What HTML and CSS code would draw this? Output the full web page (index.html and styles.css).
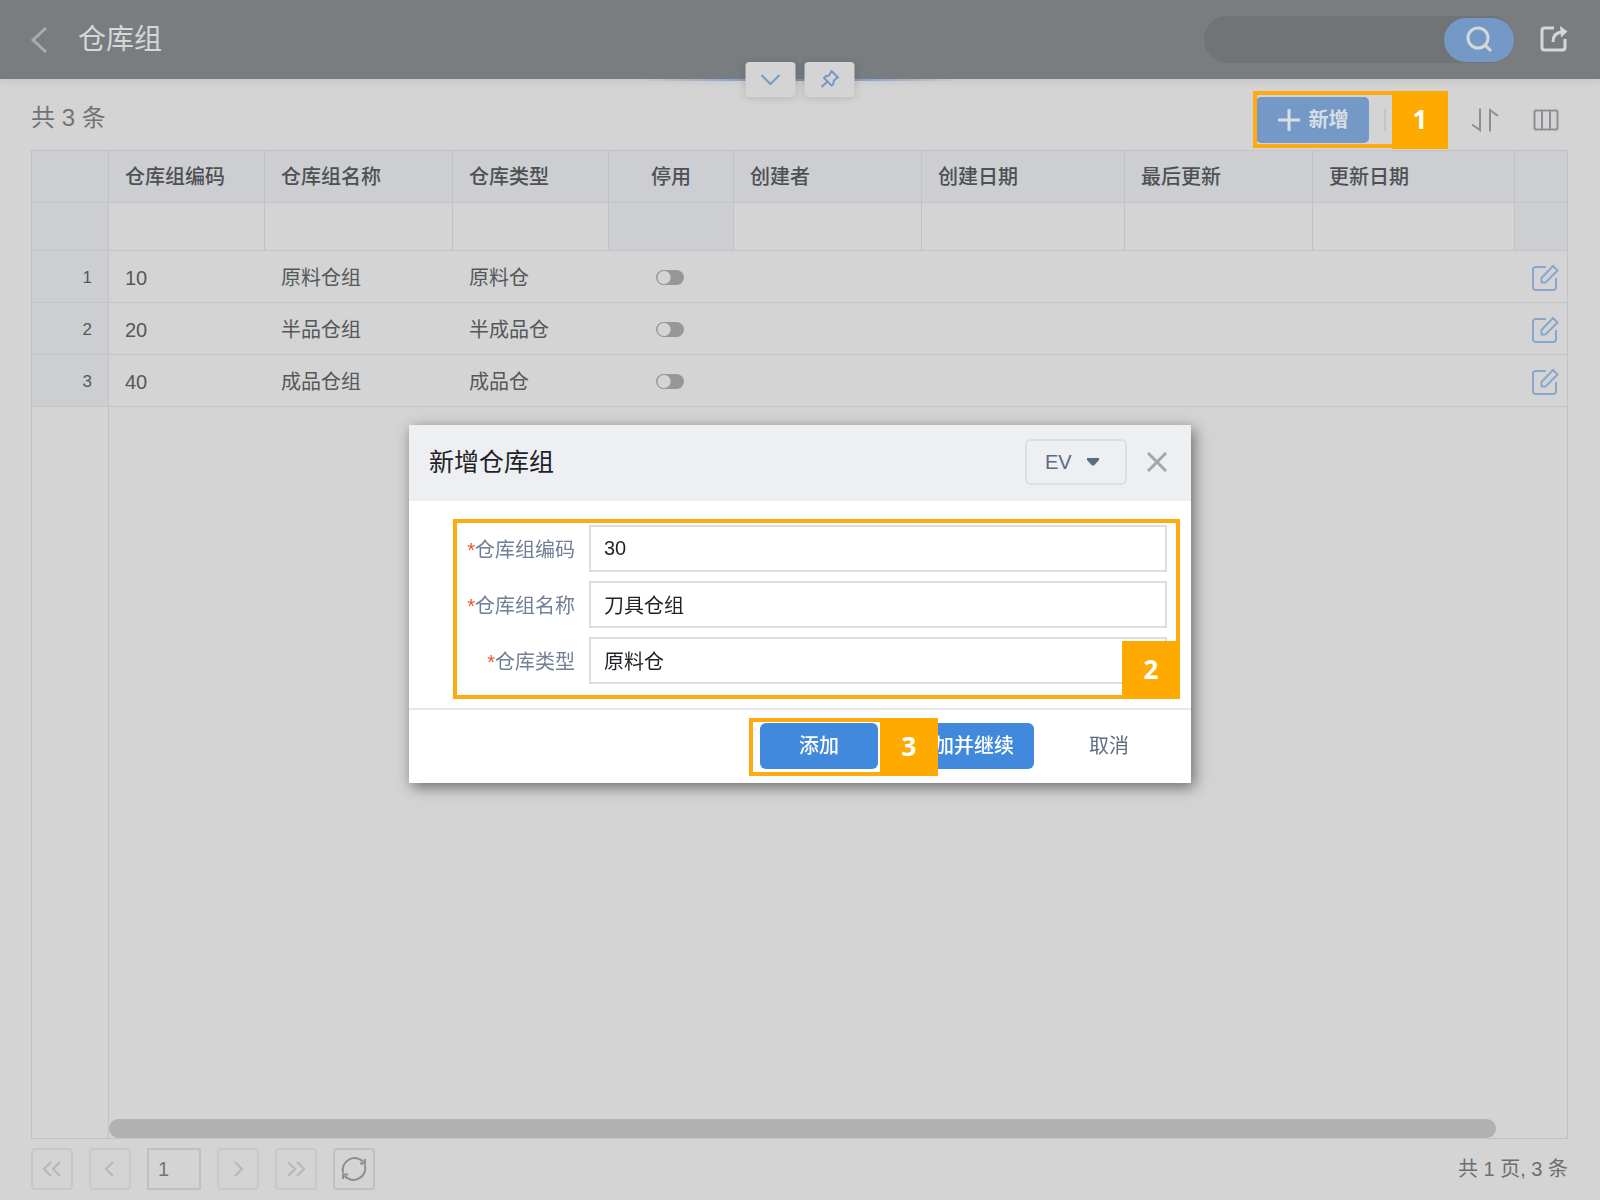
FILE: index.html
```html
<!DOCTYPE html>
<html lang="zh-CN">
<head>
<meta charset="utf-8">
<meta name="viewport" content="width=device-width, initial-scale=1">
<title>仓库组</title>
<link rel="stylesheet" href="styles.css">
</head>
<body>
<svg class="defs" aria-hidden="true">
  <symbol id="edit" viewBox="0 0 28 28"><path d="M15 3H4.500a2.500 2.500 0 0 0-2.500 2.500v18A2.500 2.500 0 0 0 4.500 26h18a2.500 2.500 0 0 0 2.500-2.500V14M10.500 14v4.500h4L26.500 6.500 22 2z"/></symbol>
</svg>
<div class="page">
  <header class="topbar">
    <button class="plain back" aria-label="返回"><svg width="18" height="28" viewBox="0 0 18 28"><path d="M16 2 3 14l13 12"/></svg></button>
    <h1>仓库组</h1>
    <form class="search">
      <input type="search" aria-label="搜索">
      <button type="button" aria-label="搜索"><svg width="28" height="28" viewBox="0 0 28 28"><circle cx="13" cy="12" r="10"/><path d="m20.500 19.500 5.500 5.500"/></svg></button>
    </form>
    <button class="plain share" aria-label="分享"><svg width="28" height="28" viewBox="0 0 28 28"><path d="M14 2H4.500A2.500 2.500 0 0 0 2 4.500v17A2.500 2.500 0 0 0 4.500 24h18a2.500 2.500 0 0 0 2.500-2.500V13M13 16c0-6 3-9.500 9-10"/><path class="solid" d="m20 0 7.500 5.500-6.500 6z"/></svg></button>
    <div class="handles">
      <button aria-label="展开"><svg width="20" height="12" viewBox="0 0 20 12"><path d="m1 1 9 9 9-9"/></svg></button>
      <button aria-label="固定"><svg width="20" height="20" viewBox="0 0 20 20"><path d="m12 1 6.500 6.500-2 1-2 2-1 4-1.500 1L4.500 8 6 6.500l3.500-1L11 3zM8 11.500 2 17"/></svg></button>
    </div>
  </header>

  <main>
    <div class="toolbar">
      <p class="count">共 3 条</p>
      <div class="add-wrap">
        <button class="add"><svg width="24" height="24" viewBox="0 0 24 24"><path d="M12 1v22M1 12h22"/></svg>新增</button>
        <div class="mark mark-add"><span>1</span></div>
      </div>
      <button class="plain tool" aria-label="排序"><svg width="28" height="26" viewBox="0 0 28 26"><path d="M1 17.500 9 23V1.500M19 24.500V3l8 6"/></svg></button>
      <button class="plain tool" aria-label="列设置"><svg width="28" height="24" viewBox="0 0 28 24"><path d="M3.500 2.500h21a1 1 0 0 1 1 1v17a1 1 0 0 1-1 1h-21a1 1 0 0 1-1-1v-17a1 1 0 0 1 1-1zM10 2.500v19M18 2.500v19"/></svg></button>
    </div>

    <div class="grid">
      <table>
        <colgroup><col class="c-index"><col class="c-small"><col class="c-medium"><col class="c-small"><col class="c-toggle"><col class="c-medium"><col class="c-date"><col class="c-medium"><col><col class="c-action"></colgroup>
        <thead>
          <tr><th></th><th>仓库组编码</th><th>仓库组名称</th><th>仓库类型</th><th class="mid">停用</th><th>创建者</th><th>创建日期</th><th>最后更新</th><th>更新日期</th><th></th></tr>
          <tr class="filter"><td class="shade"></td><td><input aria-label="筛选仓库组编码"></td><td><input aria-label="筛选仓库组名称"></td><td><input aria-label="筛选仓库类型"></td><td class="shade"></td><td><input aria-label="筛选创建者"></td><td><input aria-label="筛选创建日期"></td><td><input aria-label="筛选最后更新"></td><td><input aria-label="筛选更新日期"></td><td class="shade"></td></tr>
        </thead>
        <tbody>
          <tr><td class="num">1</td><td>10</td><td>原料仓组</td><td>原料仓</td><td class="mid"><input type="checkbox" aria-label="停用"></td><td></td><td></td><td></td><td></td><td class="act"><button class="plain" aria-label="编辑"><svg width="28" height="28"><use href="#edit"/></svg></button></td></tr>
          <tr><td class="num">2</td><td>20</td><td>半品仓组</td><td>半成品仓</td><td class="mid"><input type="checkbox" aria-label="停用"></td><td></td><td></td><td></td><td></td><td class="act"><button class="plain" aria-label="编辑"><svg width="28" height="28"><use href="#edit"/></svg></button></td></tr>
          <tr><td class="num">3</td><td>40</td><td>成品仓组</td><td>成品仓</td><td class="mid"><input type="checkbox" aria-label="停用"></td><td></td><td></td><td></td><td></td><td class="act"><button class="plain" aria-label="编辑"><svg width="28" height="28"><use href="#edit"/></svg></button></td></tr>
        </tbody>
      </table>
      <div class="rest"><div class="gutter"></div><div class="track"><div class="thumb"></div></div></div>
    </div>

    <nav class="pager" aria-label="分页">
      <button aria-label="首页"><svg width="20" height="18" viewBox="0 0 20 18"><path d="M9 2 2 9l7 7M18 2l-7 7 7 7"/></svg></button>
      <button aria-label="上一页"><svg width="20" height="18" viewBox="0 0 20 18"><path d="m13 2-7 7 7 7"/></svg></button>
      <input value="1" aria-label="页码">
      <button aria-label="下一页"><svg width="20" height="18" viewBox="0 0 20 18"><path d="m7 2 7 7-7 7"/></svg></button>
      <button aria-label="末页"><svg width="20" height="18" viewBox="0 0 20 18"><path d="m2 2 7 7-7 7M11 2l7 7-7 7"/></svg></button>
      <button class="refresh" aria-label="刷新"><svg width="28" height="28" viewBox="0 0 28 28"><path d="M3 18A12 12 0 0 1 23.500 7M25 10A12 12 0 0 1 4.500 21M25 4v4.500h-5M3 24v-4.500h5"/></svg></button>
      <p>共 1 页, 3 条</p>
    </nav>
  </main>
</div>

<div class="overlay">
  <section class="dialog" role="dialog" aria-labelledby="dlg-title">
    <header>
      <h2 id="dlg-title">新增仓库组</h2>
      <div class="view">
        <select aria-label="视图"><option>EV</option></select>
        <svg width="14" height="8" viewBox="0 0 14 8"><path d="M1 0h12v2L8 7.500H6L1 2z"/></svg>
      </div>
      <button class="plain close" aria-label="关闭"><svg width="20" height="20" viewBox="0 0 20 20"><path d="m1 1 18 18M19 1 1 19"/></svg></button>
    </header>
    <form class="fields">
      <label for="code"><i>*</i>仓库组编码</label><input id="code" value="30">
      <label for="name"><i>*</i>仓库组名称</label><input id="name" value="刀具仓组">
      <label for="type"><i>*</i>仓库类型</label><select id="type"><option>原料仓</option></select>
      <div class="mark mark-fields"><span>2</span></div>
    </form>
    <footer>
      <button class="primary">添加</button>
      <button class="primary wide">添加并继续</button>
      <button class="cancel">取消</button>
      <div class="mark mark-submit"><span>3</span></div>
    </footer>
  </section>
</div>
</body>
</html>
```

FILE: styles.css
```css
* { box-sizing: border-box; }
body {
  margin: 0;
  background: #d4d4d4;
  color: #55585b;
  font: 20px/28px "Liberation Sans", "Noto Sans CJK SC", sans-serif;
}
h1, h2, p { margin: 0; font-weight: 400; }
input, select, button { font: inherit; color: inherit; margin: 0; }
button { padding: 0; cursor: pointer; }
svg { display: block; fill: none; stroke: currentColor; stroke-width: 2; }
.defs { position: absolute; width: 0; height: 0; }
.plain { border: 0; background: none; }
.page { min-height: 100vh; display: flex; flex-direction: column; }

.topbar {
  position: relative;
  display: flex;
  align-items: center;
  height: 79px;
  padding: 0 32px 0 30px;
  background: #797d80;
  box-shadow: 0 2px 8px rgba(0, 0, 0, .08);
  color: #d6d7d8;
}
.topbar::after {
  content: "";
  position: absolute;
  left: calc(50% - 160px);
  top: 79px;
  width: 320px;
  height: 2px;
  background: linear-gradient(90deg, transparent, #7499c6 40%, #7499c6 60%, transparent);
}
.back { margin-right: 30px; color: #a9acae; }
.back svg { stroke-width: 3; }
h1 { flex: 1; font-size: 28px; line-height: 40px; }
.search {
  display: flex;
  align-items: center;
  width: 310px;
  height: 47px;
  border-radius: 24px;
  background: #707476;
}
.search input { flex: 1; min-width: 0; height: 40px; border: 0; background: none; padding: 0 20px; }
.search button {
  display: grid;
  place-items: center;
  width: 70px;
  height: 44px;
  border: 0;
  border-radius: 22px;
  background: #7499c6;
  color: #d6d7d8;
}
.search svg, .share svg { stroke-width: 3; }
.share { margin-left: 26px; }
.solid { fill: currentColor; stroke: none; }
.handles {
  position: absolute;
  z-index: 1;
  left: 50%;
  top: 62px;
  display: flex;
  gap: 9px;
  transform: translateX(-50%);
}
.handles button {
  display: grid;
  place-items: center;
  width: 50px;
  height: 35px;
  border: 0;
  border-radius: 4px;
  background: #d4d4d4;
  color: #7499c6;
  box-shadow: 0 1px 8px rgba(0, 0, 0, .14);
}

main { flex: 1; display: flex; flex-direction: column; padding: 0 32px 10px 31px; }
.toolbar { display: flex; align-items: center; height: 71px; padding: 10px 8px 0 0; color: #8c9096; }
.count { flex: 1; font-size: 24px; line-height: 32px; color: #737373; padding-bottom: 4px; }
.add-wrap { position: relative; display: flex; align-items: center; height: 46px; width: 196px; }
.add-wrap::after { content: ""; width: 2px; height: 22px; margin-left: 15px; background: #c2c4c6; }
.add {
  display: flex;
  align-items: center;
  justify-content: center;
  gap: 8px;
  width: 113px;
  height: 46px;
  border: 0;
  border-radius: 5px;
  background: #7499c6;
  color: #d9dee5;
  font-weight: 700;
}
.add svg { stroke-width: 3; }
.tool { margin-left: 19px; }
.tool + .tool { margin-left: 33px; }

.grid { flex: 1; display: flex; flex-direction: column; border: 1px solid #c0c2c6; }
table { width: 100%; table-layout: fixed; border-collapse: separate; border-spacing: 0; }
.c-index { width: 77px; }
.c-small { width: 156px; }
.c-medium { width: 188px; }
.c-toggle { width: 125px; }
.c-date { width: 203px; }
.c-action { width: 52px; }
th, td { height: 52px; padding: 0 16px; border-bottom: 1px solid #c2c4c7; text-align: left; }
th { font-weight: 500; background: #ccced1; color: #4e5154; border-right: 1px solid #c0c2c6; }
.filter td { height: 48px; padding: 0; border-right: 1px solid #c0c2c6; }
.filter input { display: block; width: 100%; height: 46px; border: 0; padding: 0 16px; background: none; }
th:last-child, .filter td:last-child { border-right: 0; }
.shade { background: #ccced1; }
tbody td { padding-top: 2px; }
.num { background: #ccced1; border-right: 1px solid #c0c2c6; font-size: 17px; text-align: right; }
.mid { text-align: center; }
td.mid { padding-right: 20px; }
.mid input {
  appearance: none;
  display: block;
  width: 28px;
  height: 15px;
  margin: 0 auto;
  border-radius: 8px;
  background: radial-gradient(circle at 8px 50%, #d4d4d4 6px, #979797 7px);
}
.act { padding: 2px 0 0 16px; color: #87a7cd; }
.act button { display: block; }
.rest { flex: 1; display: flex; }
.gutter { width: 77px; border-right: 1px solid #c0c2c6; }
.track { flex: 1; display: flex; align-items: flex-end; padding-right: 71px; }
.thumb { flex: 1; height: 19px; border-radius: 10px; background: #b1b1b1; }

.pager { display: flex; align-items: center; gap: 16px; padding-top: 9px; color: #b5b7b9; }
.pager button {
  display: grid;
  place-items: center;
  width: 42px;
  height: 42px;
  border: 2px solid #c8c9cb;
  border-radius: 4px;
  background: none;
}
.pager input { width: 54px; height: 42px; padding: 0 9px; border: 2px solid #bec0c2; background: none; color: #737373; }
.pager .refresh { border-color: #bec0c3; color: #8b8f95; }
.pager p { margin-left: auto; color: #6e6e6e; }

.overlay { position: fixed; z-index: 2; inset: 0; display: flex; align-items: center; justify-content: center; padding-top: 8px; }
.dialog { width: 782px; max-width: 96vw; background: #fff; color: #1f2328; box-shadow: 3px 4px 14px rgba(0, 0, 0, .5); }
.dialog header { display: flex; align-items: center; height: 76px; padding: 0 24px 2px 20px; background: #eeeff2; }
h2 { flex: 1; font-size: 25px; line-height: 36px; }
.view { position: relative; color: #5b6b80; }
.view select {
  appearance: none;
  display: block;
  width: 102px;
  height: 46px;
  padding: 0 18px;
  border: 2px solid #dcdfe3;
  border-radius: 6px;
  background: none;
}
.view svg { position: absolute; right: 27px; top: 19px; fill: currentColor; stroke: none; pointer-events: none; }
.close { margin-left: 20px; color: #a5a6a8; }
.close svg { stroke-width: 3; }
.fields {
  position: relative;
  display: grid;
  grid-template-columns: 142px 1fr;
  align-items: center;
  gap: 9px 14px;
  padding: 24px 24px;
}
.fields label { padding-top: 2px; text-align: right; color: #728095; }
.fields i { font-style: normal; color: #f0532d; }
.fields input, .fields select {
  appearance: none;
  width: 100%;
  height: 47px;
  padding: 0 13px;
  border: 2px solid #dcdcdc;
  border-radius: 0;
  background: #fff;
}
.fields select { padding-top: 2px; }
.dialog footer {
  position: relative;
  display: flex;
  justify-content: flex-end;
  gap: 16px;
  padding: 13px 23px 14px;
  border-top: 2px solid #e6e8ea;
}
.dialog footer button { width: 118px; height: 46px; border: 0; border-radius: 6px; background: none; color: #5f6d80; }
.dialog footer .primary { background: #4089dc; color: #fff; font-weight: 500; }
.dialog footer .wide { width: 140px; }

/* numbered step callouts */
.mark { position: absolute; z-index: 3; border: 4px solid #fa1; pointer-events: none; }
.mark span {
  position: absolute;
  right: -4px;
  top: -4px;
  width: 58px;
  height: 58px;
  background: #fa0;
  color: #fff;
  font: 700 26px/56px "Open Sans", sans-serif;
  text-align: center;
}
.mark-add { left: -3px; top: -6px; width: 195px; height: 57px; }
.mark-add span { width: 56px; }
.mark-fields { left: 44px; right: 11px; top: 18px; bottom: 9px; }
.mark-fields span { top: auto; bottom: -4px; }
.mark-submit { right: 253px; top: 8px; width: 189px; height: 58px; }
```
